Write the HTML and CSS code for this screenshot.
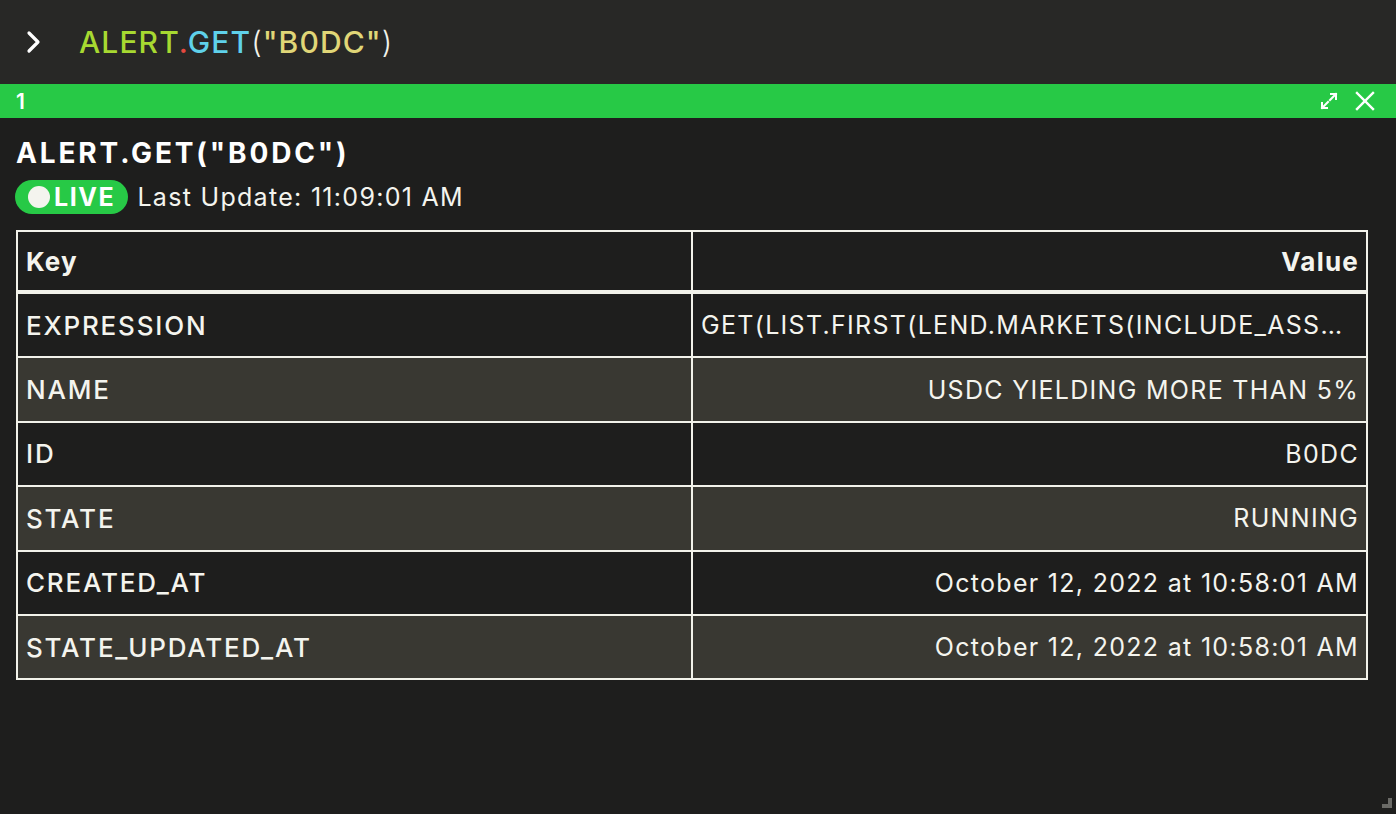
FILE: index.html
```html
<!DOCTYPE html>
<html>
<head>
<meta charset="utf-8">
<link rel="stylesheet" href="styles.css">
</head>
<body>
<div class="app">
  <div class="prompt">
    <svg class="chev" width="20" height="24" viewBox="0 0 20 24"><path d="M5 3 L14 12 L5 21" fill="none" stroke="#ffffff" stroke-width="3.2" stroke-linecap="round" stroke-linejoin="round"/></svg>
    <div class="cmd"><span class="c-ns">ALERT</span><span class="c-dot">.</span><span class="c-fn">GET</span><span class="c-p">(</span><span class="c-str">"B0DC"</span><span class="c-p">)</span></div>
  </div>
  <div class="tabbar">
    <span class="tabnum">1</span>
    <div class="tabicons">
      <svg width="20" height="20" viewBox="0 0 20 20"><g fill="none" stroke="#fff" stroke-width="2" stroke-linecap="square"><path d="M11 9 L17 3"/><path d="M12 3 H17 V8"/><path d="M9 11 L3 17"/><path d="M3 12 V17 H8"/></g></svg>
      <svg width="22" height="22" viewBox="0 0 22 22"><g stroke="#fff" stroke-width="2.4" stroke-linecap="square"><path d="M3 3 L19 19"/><path d="M19 3 L3 19"/></g></svg>
    </div>
  </div>
  <div class="panel">
    <h1 class="title">ALERT.GET("B0DC")</h1>
    <div class="status">
      <span class="live"><span class="dot"></span>LIVE</span>
      <span class="upd">Last Update: 11:09:01 AM</span>
    </div>
    <table class="kv">
      <thead>
        <tr><th class="k">Key</th><th class="v">Value</th></tr>
      </thead>
      <tbody>
        <tr><td class="k">EXPRESSION</td><td class="v trunc">GET(LIST.FIRST(LEND.MARKETS(INCLUDE_ASSETS=["USDC"])),"SUPPLY_APY")&gt;5</td></tr>
        <tr class="alt"><td class="k">NAME</td><td class="v">USDC YIELDING MORE THAN 5%</td></tr>
        <tr><td class="k">ID</td><td class="v">B0DC</td></tr>
        <tr class="alt"><td class="k">STATE</td><td class="v">RUNNING</td></tr>
        <tr><td class="k">CREATED_AT</td><td class="v">October 12, 2022 at 10:58:01 AM</td></tr>
        <tr class="alt"><td class="k">STATE_UPDATED_AT</td><td class="v">October 12, 2022 at 10:58:01 AM</td></tr>
      </tbody>
    </table>
  </div>
  <div class="grip"></div>
</div>
</body>
</html>
```
FILE: styles.css
```css
html, body {
  margin: 0;
  padding: 0;
  background: #1e1e1d;
}
body {
  font-family: Inter, "Noto Sans", "Liberation Sans", sans-serif;
  color: #f4f4ee;
}
.app {
  width: 1396px;
  height: 814px;
  display: flex;
  flex-direction: column;
  position: relative;
  overflow: hidden;
}
.prompt {
  height: 84px;
  background: #282826;
  display: flex;
  align-items: center;
  box-sizing: border-box;
  padding: 0 0 0 24px;
}
.chev {
  display: block;
  margin-right: 35px;
}
.cmd {
  font-size: 30px;
  font-weight: 500;
  letter-spacing: 1.1px;
  line-height: 1;
}
.c-ns { color: #a7d931; }
.c-dot { color: #e5483f; }
.c-fn { color: #5fd1ea; }
.c-p { color: #f2f2ea; font-weight: 300; }
.c-str { color: #e0d677; }
.tabbar {
  height: 34px;
  background: #27c946;
  display: flex;
  align-items: center;
  justify-content: space-between;
  padding: 0 20px 0 16px;
}
.tabnum {
  font-size: 21px;
  font-weight: 600;
  color: #fff;
}
.tabicons {
  display: flex;
  align-items: center;
  gap: 15px;
}
.tabicons svg { display: block; }
.panel {
  padding: 17px 28px 0 16px;
}
.title {
  margin: 0;
  font-size: 28px;
  font-weight: 700;
  line-height: 36px;
  letter-spacing: 2.85px;
  color: #fff;
}
.status {
  display: flex;
  align-items: center;
  margin-top: 9px;
  gap: 9px;
}
.live {
  display: inline-flex;
  align-items: center;
  height: 34px;
  box-sizing: border-box;
  padding: 0 13px 0 13px;
  background: #27c946;
  border-radius: 17px;
  font-size: 25px;
  font-weight: 700;
  letter-spacing: 1.6px;
  color: #fff;
  margin-left: -1px;
}
.live .dot {
  width: 22px;
  height: 22px;
  border-radius: 50%;
  background: #f4f4ee;
  margin-right: 4px;
}
.upd {
  font-size: 25px;
  font-weight: 400;
  letter-spacing: 1.3px;
  color: #f4f4ee;
}
.kv {
  margin-top: 16px;
  width: 1352px;
  border-collapse: collapse;
  table-layout: fixed;
  font-size: 25px;
}
.kv th, .kv td {
  border: 2px solid #f2f2ea;
  padding: 0 7px 0 8px;
  white-space: nowrap;
}
.kv th {
  height: 58px;
  font-weight: 700;
  font-size: 26px;
  letter-spacing: 1.2px;
  border-bottom-width: 4px;
}
.kv td {
  height: 62.4px;
  font-weight: 500;
  font-size: 26px;
  letter-spacing: 1.8px;
}
.kv th.k, .kv td.k { text-align: left; }
.kv th.v, .kv td.v { text-align: right; }
.kv td.v { font-weight: 400; font-size: 25px; letter-spacing: 1.3px; }
.kv td.trunc {
  overflow: hidden;
  text-overflow: ellipsis;
  text-align: left;
  padding-right: 20px;
}
.kv tr.alt td { background: #393832; }
.grip {
  position: absolute;
  right: 4px;
  bottom: 6px;
  width: 10px;
  height: 10px;
  border-right: 4px solid #6a6a66;
  border-bottom: 4px solid #6a6a66;
  box-sizing: border-box;
}
```
